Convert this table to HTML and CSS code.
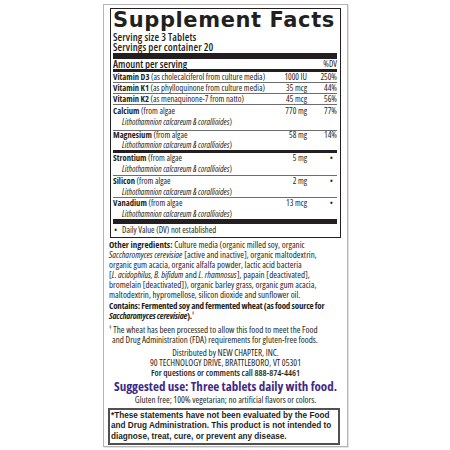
FILE: index.html
```html
<!DOCTYPE html>
<html lang="en">
<head>
<meta charset="utf-8">
<title>Supplement Facts</title>
<link rel="stylesheet" href="styles.css">
</head>
<body>
<div class="panel">
  <div class="facts">
    <h1 class="title">Supplement Facts</h1>
    <div class="serving">Serving size 3 Tablets<br>Servings per container 20</div>
    <div class="bar bar-thick"></div>
    <div class="row head"><span class="label">Amount per serving</span><span></span><span class="dv">%DV</span></div>
    <div class="bar bar-med"></div>
    <div class="row"><span class="label"><b>Vitamin D3</b> (as cholecalciferol from culture media)</span><span class="amt">1000 IU</span><span class="dv">250%</span></div>
    <div class="row"><span class="label"><b>Vitamin K1</b> (as phylloquinone from culture media)</span><span class="amt">35 mcg</span><span class="dv">44%</span></div>
    <div class="row"><span class="label"><b>Vitamin K2</b> (as menaquinone-7 from natto)</span><span class="amt">45 mcg</span><span class="dv">56%</span></div>
    <div class="row tall calcium"><span class="label"><b>Calcium</b> (from algae<br><i class="sub">Lithothamnion calcareum &amp; corallioides</i>)</span><span class="amt">770 mg</span><span class="dv">77%</span></div>
    <div class="row tall magnesium noline"><span class="label"><b>Magnesium</b> (from algae<br><i class="sub">Lithothamnion calcareum &amp; corallioides</i>)</span><span class="amt">58 mg</span><span class="dv">14%</span></div>
    <div class="bar bar-med"></div>
    <div class="row tall strontium"><span class="label"><b>Strontium</b> (from algae<br><i class="sub">Lithothamnion calcareum &amp; corallioides</i>)</span><span class="amt">5 mg</span><span class="dv star">•</span></div>
    <div class="row tall"><span class="label"><b>Silicon</b> (from algae<br><i class="sub">Lithothamnion calcareum &amp; corallioides</i>)</span><span class="amt">2 mg</span><span class="dv star">•</span></div>
    <div class="row tall noline"><span class="label"><b>Vanadium</b> (from algae<br><i class="sub">Lithothamnion calcareum &amp; corallioides</i>)</span><span class="amt">13 mcg</span><span class="dv star">•</span></div>
    <div class="bar bar-thick2"></div>
    <div class="note"><span class="bullet">•</span>Daily Value (DV) not established</div>
  </div>

  <p class="para"><b>Other ingredients:</b> Culture media (organic milled soy, organic<br><i>Saccharomyces cerevisiae</i> [active and inactive], organic maltodextrin,<br>organic gum acacia, organic alfalfa powder, lactic acid bacteria<br>[<i>L. acidophilus, B. bifidum</i> and <i>L. rhamnosus</i>], papain [deactivated],<br>bromelain [deactivated]), organic barley grass, organic gum acacia,<br>maltodextrin, hypromellose, silicon dioxide and sunflower oil.</p>
  <p class="para contains"><b>Contains: Fermented soy and fermented wheat (as food source for<br><i>Saccharomyces cerevisiae</i>).</b><sup>‡</sup></p>
  <p class="para wheat"><sup>‡</sup> The wheat has been processed to allow this food to meet the Food<br><span class="indent">and Drug Administration (FDA) requirements for gluten-free foods.</span></p>
  <p class="center dist">Distributed by NEW CHAPTER, INC.<br>90 TECHNOLOGY DRIVE, BRATTLEBORO, VT 05301<br><span class="q">For questions or comments call 888-874-4461</span></p>
  <p class="suggest">Suggested use: Three tablets daily with food.</p>
  <p class="center gluten">Gluten free; 100% vegetarian; no artificial flavors or colors.</p>
  <div class="disclaimer">*These statements have not been evaluated by the Food<br>and Drug Administration. This product is not intended to<br>diagnose, treat, cure, or prevent any disease.</div>
</div>
</body>
</html>
```

FILE: styles.css
```css
* { box-sizing: border-box; }
html, body { margin: 0; padding: 0; background: #fff; }
body {
  width: 450px;
  height: 450px;
  overflow: hidden;
  color: #231f20;
  font-family: "Open Sans", "Liberation Sans", sans-serif;
  font-stretch: 75%;
  font-weight: 500;
}
b { font-weight: 700; }
.panel {
  width: 245px;
  height: 443px;
  margin: 4px 0 0 103px;
  border: 1px solid #b4b4b4;
  box-shadow: 1px 1px 0 #e4e4e4;
  padding: 3px 6px 0 6px;
}
.facts {
  border: 1px solid #231f20;
  padding: 0 3px 2px 2px;
}
.title {
  margin: 0;
  font-family: "DejaVu Sans", sans-serif;
  font-stretch: 100%;
  font-weight: 900;
  font-size: 21px;
  line-height: 21px;
  letter-spacing: 0.6px;
  padding-top: 1px;
  white-space: nowrap;
}
.serving {
  font-size: 10.6px;
  line-height: 10px;
  font-weight: 600;
  letter-spacing: 0.1px;
  padding-top: 1px;
}
.bar { background: #231f20; }
.bar-thick { height: 6px; margin-top: 1px; }
.bar-thick2 { height: 5px; }
.bar-med { height: 3px; }
.row {
  display: grid;
  grid-template-columns: 1fr 36px 30px;
  font-size: 8.6px;
  line-height: 10px;
  border-bottom: 1px solid #6d6d6d;
  white-space: nowrap;
}
.row.noline { border-bottom: none; }
.row.tall { line-height: 10.5px; }
.row.calcium { line-height: 11px; padding: 1px 0 2px; }
.row.magnesium { line-height: 9.5px; }
.row.strontium { line-height: 11px; }
.row.head { font-size: 10.4px; font-weight: 600; border-bottom: none; }
.row.head .dv { font-size: 8.6px; font-weight: 500; }
.amt { text-align: right; }
.dv { text-align: right; }
.star { padding-right: 4px; }
.sub { padding-left: 9px; }
.note {
  font-size: 8.6px;
  line-height: 10px;
  padding-top: 1px;
  white-space: nowrap;
}
.bullet { display: inline-block; width: 9px; padding-left: 1px; }
.para {
  margin: 2px 0 0 -1px;
  font-size: 9px;
  line-height: 10px;
  white-space: nowrap;
}
.para sup { font-size: 6px; line-height: 0; }
.contains { margin-top: 1px; letter-spacing: -0.2px; }
.wheat { margin-top: 4px; }
.indent { padding-left: 3px; }
.center { text-align: center; margin: 0; font-size: 9px; line-height: 10px; white-space: nowrap; }
.dist { margin-top: 3px; }
.q { font-weight: 600; }
.suggest {
  margin: 1px 0 0 0;
  text-align: center;
  font-weight: 700;
  font-size: 13px;
  line-height: 14px;
  color: #3f2a86;
  white-space: nowrap;
}
.gluten { margin-top: 2px; }
.disclaimer {
  margin: 3px 0 0 -2px;
  width: 232px;
  border: 2px solid #505050;
  padding: 1px 2px 1px 1px;
  font-family: "Liberation Sans", sans-serif;
  font-stretch: 100%;
  font-weight: 700;
  font-size: 8.2px;
  line-height: 10.4px;
  white-space: nowrap;
}
```
